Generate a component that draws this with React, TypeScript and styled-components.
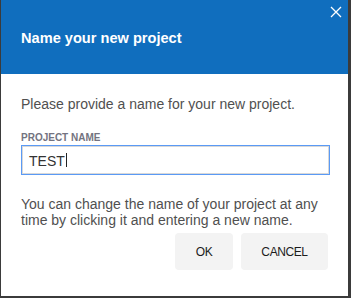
import React from "react";
import styled, { createGlobalStyle } from "styled-components";

const Global = createGlobalStyle`
  html, body { margin: 0; padding: 0; background: #3b3b3b; }
  body { width: 351px; height: 298px; overflow: hidden; font-family: "Liberation Sans", Arial, sans-serif; }
`;

const Backdrop = styled.div`
  width: 351px;
  height: 298px;
  background: #3b3b3b;
  display: flex;
  align-items: flex-start;
  padding-left: 1px;
  box-sizing: border-box;
`;

const Dialog = styled.div`
  width: 347px;
  height: 296px;
  background: #ffffff;
  display: flex;
  flex-direction: column;
  position: relative;
`;

const Header = styled.div`
  height: 74px;
  background: #106ebe;
  display: flex;
  align-items: center;
  padding: 0 20px;
  box-sizing: border-box;
`;

const Title = styled.h2`
  margin: 0;
  color: #ffffff;
  font-size: 14.6px;
  font-weight: bold;
  line-height: 18px;
  padding-top: 1px;
`;

const Close = styled.button`
  position: absolute;
  top: 6px;
  right: 6px;
  width: 12px;
  height: 12px;
  padding: 0;
  border: 0;
  background: transparent;
  display: flex;
  cursor: pointer;
`;

const Body = styled.div`
  display: flex;
  flex-direction: column;
  padding: 22px 19px 0 20px;
`;

const Text = styled.p<{ $top?: number }>`
  margin: ${(p) => p.$top ?? 0}px 0 0;
  font-size: 14px;
  line-height: 16px;
  color: #505050;
`;

const Label = styled.label`
  margin-top: 20px;
  font-size: 10px;
  line-height: 12px;
  font-weight: bold;
  color: #737380;
  text-transform: uppercase;
`;

const Field = styled.div`
  margin: 2px 0 0 1px;
  width: 307px;
  height: 28px;
  box-sizing: border-box;
  border: 1px solid #d8d8d8;
  box-shadow: 0 0 0 1px #5b9af5;
  padding: 1px 6px 0;
  display: flex;
  align-items: center;
  font-size: 14px;
  color: #333;
`;

const Caret = styled.span`
  display: inline-block;
  width: 1px;
  height: 14px;
  background: #222;
  margin-left: 1px;
  margin-top: -1px;
`;

const Actions = styled.div`
  display: flex;
  justify-content: flex-end;
  gap: 8px;
  margin-top: 5px;
  padding-right: 1px;
`;

const Button = styled.button<{ $w: number }>`
  width: ${(p) => p.$w}px;
  height: 37px;
  border: 0;
  border-radius: 4px;
  background: #f3f3f3;
  color: #1c1c1c;
  font-family: "Liberation Sans", Arial, sans-serif;
  font-size: 12px;
  letter-spacing: -0.4px;
  padding: 0;
  cursor: pointer;
`;

export default function App() {
  return (
    <>
      <Global />
      <Backdrop>
        <Dialog>
          <Header>
            <Title>Name your new project</Title>
          </Header>
          <Close aria-label="Close">
            <svg width="12" height="12" viewBox="0 0 12 12">
              <path d="M1 1 L11 11 M11 1 L1 11" stroke="#ffffff" strokeWidth="1.3" fill="none" />
            </svg>
          </Close>
          <Body>
            <Text>Please provide a name for your new project.</Text>
            <Label>Project Name</Label>
            <Field role="textbox">
              TEST
              <Caret />
            </Field>
            <Text $top={22}>
              You can change the name of your project at any time by clicking it and entering a new name.
            </Text>
            <Actions>
              <Button $w={58}>OK</Button>
              <Button $w={87}>CANCEL</Button>
            </Actions>
          </Body>
        </Dialog>
      </Backdrop>
    </>
  );
}
